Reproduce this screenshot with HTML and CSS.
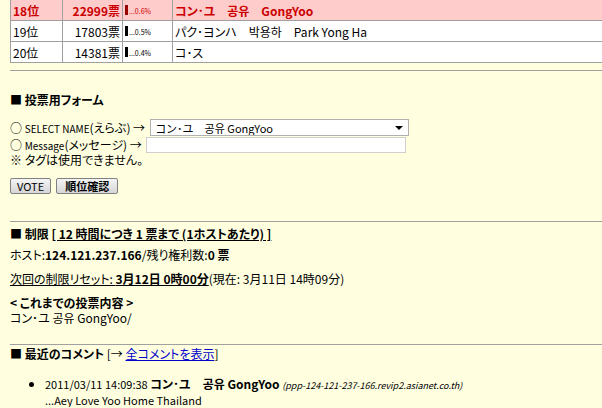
FILE: index.html
```html
<!DOCTYPE html>
<html lang="ja">
<head>
    <meta charset="UTF-8">
    <title>投票</title>
    <link rel="stylesheet" href="styles.css">
</head>
<body>
    <table class="rank">
        <tr class="top">
            <td class="pos">18位</td>
            <td class="votes">22999票</td>
            <td class="bar"><span class="stick"></span><span class="pct">...0.6%</span></td>
            <td class="name">コン･ユ　공유　GongYoo</td>
        </tr>
        <tr>
            <td class="pos">19位</td>
            <td class="votes">17803票</td>
            <td class="bar"><span class="stick"></span><span class="pct">...0.5%</span></td>
            <td class="name">パク･ヨンハ　박용하　Park Yong Ha</td>
        </tr>
        <tr>
            <td class="pos">20位</td>
            <td class="votes">14381票</td>
            <td class="bar"><span class="stick"></span><span class="pct">...0.4%</span></td>
            <td class="name">コ･ス</td>
        </tr>
    </table>
    <hr class="line first">

    <div class="form">
        <p class="head">■ 投票用フォーム</p>
        <div class="field sel">
            <span>○ <span class="en">SELECT NAME</span>(えらぶ) →</span>
            <span class="pick">
                <select>
                    <option>コン･ユ　공유 GongYoo</option>
                    <option>パク･ヨンハ　박용하 Park Yong Ha</option>
                    <option>コ･ス</option>
                </select>
            </span>
        </div>
        <div class="field msg">
            <span>○ <span class="en">Message</span>(メッセージ) →</span>
            <input type="text">
        </div>
        <p class="note">※ タグは使用できません。</p>
        <div class="btns">
            <button>VOTE</button>
            <button class="bold">順位確認</button>
        </div>
    </div>
    <hr class="line">

    <div class="limit">
        <p class="head">■ 制限 <u>[ 12 時間につき 1 票まで (1ホストあたり) ]</u></p>
        <p class="host">ホスト:<b>124.121.237.166</b>/残り権利数:<b>0 票</b></p>
        <p class="reset"><u>次回の制限リセット: <b>3月12日 0時00分</b></u>(現在: 3月11日 14時09分)</p>
        <p class="past"><b>&lt; これまでの投票内容 &gt;</b><br>コン･ユ 공유 GongYoo/</p>
    </div>
    <hr class="line">

    <div class="comments">
        <p class="head">■ 最近のコメント <span class="norm">[→ <a href="#">全コメントを表示</a>]</span></p>
        <ul>
            <li><span class="en">2011/03/11 14:09:38</span> <b>コン･ユ　공유 GongYoo</b> <i>(ppp-124-121-237-166.revip2.asianet.co.th)</i><br><span class="en">...Aey Love Yoo Home Thailand</span></li>
        </ul>
    </div>
</body>
</html>
```

FILE: styles.css
```css
body{
    margin: 0;
    background-color: #ffffe0;
    font-family: "Noto Sans CJK JP", "DejaVu Sans", sans-serif;
    font-size: 12px;
    line-height: 15px;
    font-feature-settings: "palt";
    color: #000;
}

p{
    margin: 0;
}

.rank{
    margin-left: 10px;
    width: 600px;
    border-collapse: collapse;
    background-color: #fff;
}

.rank td{
    border: 1px solid #a0a0a0;
    border-top: none;
    height: 20px;
    padding: 0 2px;
    white-space: nowrap;
}

.rank td.pos{ width: 47px; }
.rank td.votes{ width: 55px; text-align: right; }
.rank td.bar{ width: 45px; }

.top td{
    background-color: #ffcccc;
    color: #cc0000;
    font-weight: bold;
}

.stick{
    display: inline-block;
    width: 3px;
    height: 10px;
    background-color: #000;
    vertical-align: -1px;
}

.top .stick{ background-color: #990000; }

.pct{
    font-size: 7px;
    font-weight: normal;
    margin-left: 1px;
}

.line{
    margin: 7px 0 0 10px;
    border: none;
    border-top: 1px solid #a0a0a0;
    height: 0;
}

.form, .limit, .comments{
    padding-left: 10px;
}

.head{
    font-weight: bold;
}

.en{
    font-size: 11px;
}

.field .en{
    font-size: 10px;
}

.form .head{
    margin-top: 21px;
}

.field{
    display: flex;
    align-items: center;
}

.field.sel{
    margin-top: 12px;
    height: 17px;
}

.field.msg{
    height: 17px;
}

.pick{
    position: relative;
    margin-left: 5px;
}

select{
    appearance: none;
    width: 259px;
    height: 17px;
    padding: 0 0 0 4px;
    border: 1px solid #b0b0b0;
    border-radius: 0;
    background-color: #fff;
    font-family: inherit;
    font-size: 11px;
    color: #000;
}

.pick::after{
    content: "";
    position: absolute;
    right: 6px;
    top: 7px;
    border-left: 4px solid transparent;
    border-right: 4px solid transparent;
    border-top: 4px solid #000;
}

input{
    margin-left: 4px;
    width: 260px;
    height: 16px;
    padding: 0;
    border: 1px solid #cfcfcf;
    box-sizing: border-box;
}

.note{
    line-height: 13px;
}

.btns{
    margin-top: 12px;
    display: flex;
    gap: 5px;
}

button{
    height: 16px;
    padding: 0 6px;
    border: 1px solid #808080;
    border-radius: 2px;
    background: linear-gradient(#f4f4f4, #d6d6d6);
    font-family: inherit;
    font-size: 11px;
    line-height: 13px;
}

button.bold{
    font-weight: bold;
    padding: 0 8px;
}

.form + .line{
    margin-top: 27px;
}

.limit .head{
    margin-top: 4px;
}

.host{
    margin-top: 6px;
}

.reset{
    margin-top: 9px;
}

.past{
    margin-top: 9px;
}

.limit + .line{
    margin-top: 19px;
}

.comments .head{
    margin-top: 1px;
}

.norm{
    font-weight: normal;
}

a{
    color: #0000cc;
}

ul{
    margin: 16px 0 0;
    padding-left: 35px;
}

li{
    list-style: disc;
    line-height: 14px;
}

i{
    font-size: 9px;
}
```
